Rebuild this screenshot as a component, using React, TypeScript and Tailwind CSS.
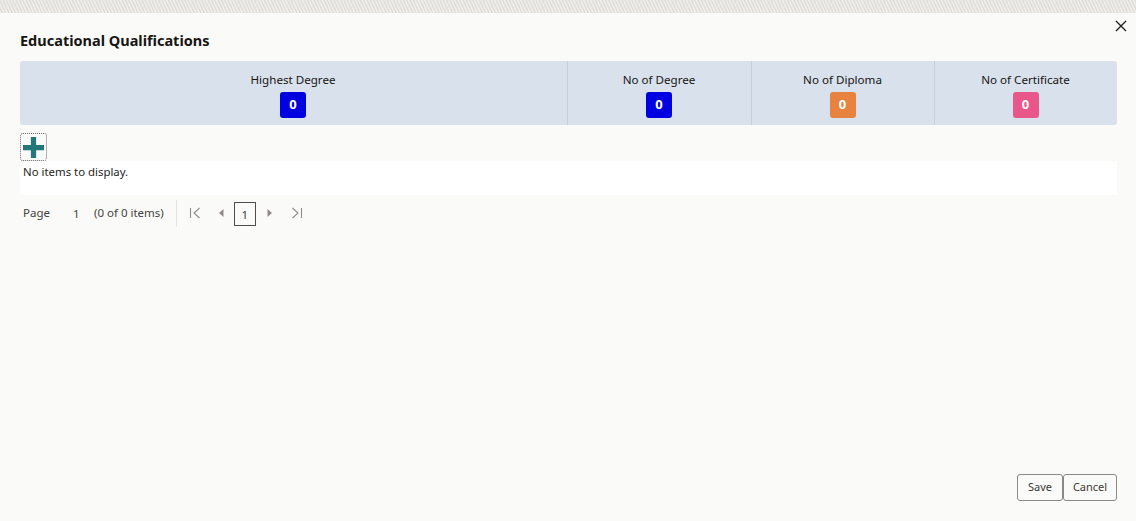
import React from "react";

const stats = [
  { label: "Highest Degree", color: "bg-[#0000e0]" },
  { label: "No of Degree", color: "bg-[#0000e0]" },
  { label: "No of Diploma", color: "bg-[#e8833f]" },
  { label: "No of Certificate", color: "bg-[#e8568a]" },
];

export default function App() {
  return (
    <div className="w-[1136px] h-[521px] overflow-hidden flex flex-col bg-[#fafaf8] text-[#1f1e1c] font-['Noto_Sans','Open_Sans',sans-serif]">
      <div className="h-[13px] shrink-0 bg-[#e9e7e4] bg-[repeating-linear-gradient(65deg,#f0eeeb_0px,#f0eeeb_1px,#dcdad7_2px,#e8e6e3_3px)]" />
      <div className="relative flex-1 flex flex-col pl-5 pr-[19px] min-h-0">
        <button className="absolute right-[9px] top-[7px] text-[#222]" aria-label="Close">
          <svg width="12" height="12" viewBox="0 0 12 12" fill="none" stroke="currentColor" strokeWidth="1.4">
            <path d="M1 1l10 10M11 1L1 11" />
          </svg>
        </button>
        <h1 className="mt-[17px] h-[21px] text-[14.5px] leading-[21px] font-bold text-[#161513]">Educational Qualifications</h1>
        <div className="mt-[10px] h-[64px] grid grid-cols-[548px_184px_183px_182px] rounded-[3px] bg-[#d9e1ec]">
          {stats.map((s, i) => (
            <div
              key={s.label}
              className={`flex flex-col items-center pt-[10px] pr-px ${i < 3 ? "border-r border-[#c6cfda]" : ""}`}
            >
              <div className="h-[18px] text-[11.6px] leading-[18px] text-[#161513]">{s.label}</div>
              <div className={`mt-[3px] w-[26px] h-[26px] rounded-[3px] ${s.color} flex items-center justify-center text-white text-[13px] font-bold`}>
                0
              </div>
            </div>
          ))}
        </div>
        <button className="mt-[8px] w-[27px] h-[28px] rounded-[3px] border border-dotted border-[#6b6964] flex items-center justify-center bg-[#fafaf8]" aria-label="Add">
          <svg width="21" height="21" viewBox="0 0 20 20" fill="#23767a">
            <path d="M7.5 0h5v7.5H20v5h-7.5V20h-5v-7.5H0v-5h7.5z" />
          </svg>
        </button>
        <div className="h-[34px] bg-white pl-[3px] pt-[2px] text-[11.4px] leading-[18px] text-[#1f1e1c]">No items to display.</div>
        <div className="h-[36px] flex items-center pl-[3px] text-[11.5px] text-[#45433f]">
          <span className="w-[50px]">Page</span>
          <span className="mt-[2px] w-[21px]">1</span>
          <span>(0 of 0 items)</span>
          <span className="ml-[12px] h-[27px] w-px bg-[#e6e4e0]" />
          <svg className="ml-[12px] text-[#8f8c87]" width="12" height="12" viewBox="0 0 12 12" fill="none" stroke="currentColor" strokeWidth="1.1">
            <path d="M1.5 1v10M10.5 1L5 6l5.5 5" />
          </svg>
          <svg className="ml-[18px] text-[#8f8c87]" width="5" height="8" viewBox="0 0 5 8" fill="currentColor">
            <path d="M4.5 0v8L0 4z" />
          </svg>
          <span className="ml-[10px] mt-[1px] w-[22px] h-[24px] border border-[#4f4d49] flex items-center justify-center pt-[2px] text-[#3a3935]">1</span>
          <svg className="ml-[11px] text-[#8f8c87]" width="5" height="8" viewBox="0 0 5 8" fill="currentColor">
            <path d="M0.5 0v8L5 4z" />
          </svg>
          <svg className="ml-[19px] text-[#8f8c87]" width="12" height="12" viewBox="0 0 12 12" fill="none" stroke="currentColor" strokeWidth="1.1">
            <path d="M10.5 1v10M1.5 1L7 6l-5.5 5" />
          </svg>
        </div>
        <div className="mt-auto mb-[20px] flex justify-end">
          <button className="w-[46px] h-[27px] rounded-[3px] border border-[#8b8985] text-[11px] text-[#3a3935]">Save</button>
          <button className="w-[54px] h-[27px] rounded-[3px] border border-[#8b8985] text-[11px] text-[#3a3935]">Cancel</button>
        </div>
      </div>
    </div>
  );
}
